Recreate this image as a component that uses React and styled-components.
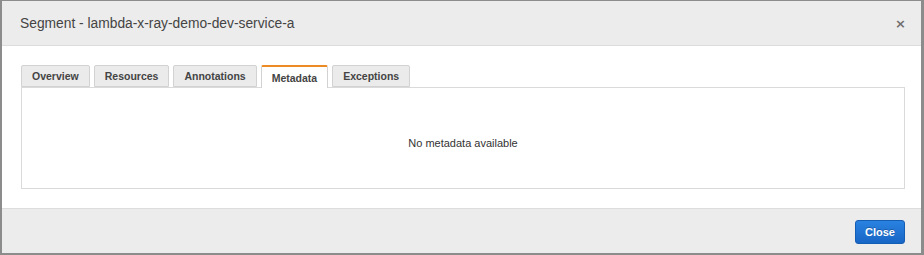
import React from "react";
import styled, { createGlobalStyle } from "styled-components";

const Global = createGlobalStyle`
  html, body { margin: 0; padding: 0; }
  body {
    background: #8c8c8c;
    font-family: "Liberation Sans", Arial, Helvetica, sans-serif;
    width: 924px;
    height: 255px;
    overflow: hidden;
  }
`;

const Dialog = styled.div`
  margin: 1px 3px 0 2px;
  height: 252px;
  background: #fff;
  display: flex;
  flex-direction: column;
`;

const Header = styled.div`
  height: 44px;
  flex: none;
  background: #ececec;
  border-bottom: 1px solid #dcdcdc;
  display: flex;
  align-items: center;
  justify-content: space-between;
  padding: 0 15px 0 18px;
`;

const Title = styled.h4`
  margin: 0;
  font-size: 13.8px;
  font-weight: normal;
  color: #444;
  padding-top: 1px;
`;

const CloseX = styled.button`
  border: 0;
  background: none;
  padding: 0;
  font-family: "DejaVu Sans", sans-serif;
  font-size: 13px;
  font-weight: bold;
  color: #6f6f6f;
  line-height: 1;
  cursor: pointer;
`;

const Body = styled.div`
  flex: 1;
  padding: 19px 16px 18px 19px;
`;

const Tabs = styled.div`
  display: flex;
  gap: 4px;
  height: 22px;
`;

const Tab = styled.div`
  box-sizing: border-box;
  height: ${(p) => (p.$active ? "23px" : "22px")};
  padding: 0 10px;
  display: flex;
  align-items: center;
  font-size: 10.5px;
  font-weight: bold;
  color: #444;
  background: ${(p) => (p.$active ? "#fff" : "#ebebeb")};
  border: 1px solid #d2d2d2;
  border-bottom: ${(p) => (p.$active ? "0" : "1px solid #d2d2d2")};
  border-top: ${(p) => (p.$active ? "2px solid #ec8b23" : "1px solid #d2d2d2")};
  border-radius: 2px 2px 0 0;
  position: relative;
  z-index: ${(p) => (p.$active ? 1 : 0)};
`;

const Panel = styled.div`
  box-sizing: border-box;
  height: 102px;
  padding-top: 10px;
  border: 1px solid #dadada;
  display: flex;
  align-items: center;
  justify-content: center;
  font-size: 11px;
  color: #333;
`;

const Footer = styled.div`
  flex: none;
  height: 44px;
  background: #ececec;
  border-top: 1px solid #dcdcdc;
  display: flex;
  align-items: center;
  justify-content: flex-end;
  padding: 0 16px 0 0;
`;

const Button = styled.button`
  box-sizing: border-box;
  width: 50px;
  height: 24px;
  margin-top: 1px;
  border: 1px solid #145db4;
  border-radius: 3px;
  background: linear-gradient(#2a82e0, #1866c6);
  color: #fff;
  font-family: "Liberation Sans", Arial, sans-serif;
  font-size: 11px;
  font-weight: bold;
  padding: 0;
  text-shadow: 0 -1px 0 rgba(0, 0, 0, 0.25);
`;

const tabs = ["Overview", "Resources", "Annotations", "Metadata", "Exceptions"];

export default function App() {
  return (
    <>
      <Global />
      <Dialog>
        <Header>
          <Title>Segment - lambda-x-ray-demo-dev-service-a</Title>
          <CloseX aria-label="Close">×</CloseX>
        </Header>
        <Body>
          <Tabs>
            {tabs.map((t) => (
              <Tab key={t} $active={t === "Metadata"}>
                {t}
              </Tab>
            ))}
          </Tabs>
          <Panel>No metadata available</Panel>
        </Body>
        <Footer>
          <Button>Close</Button>
        </Footer>
      </Dialog>
    </>
  );
}
